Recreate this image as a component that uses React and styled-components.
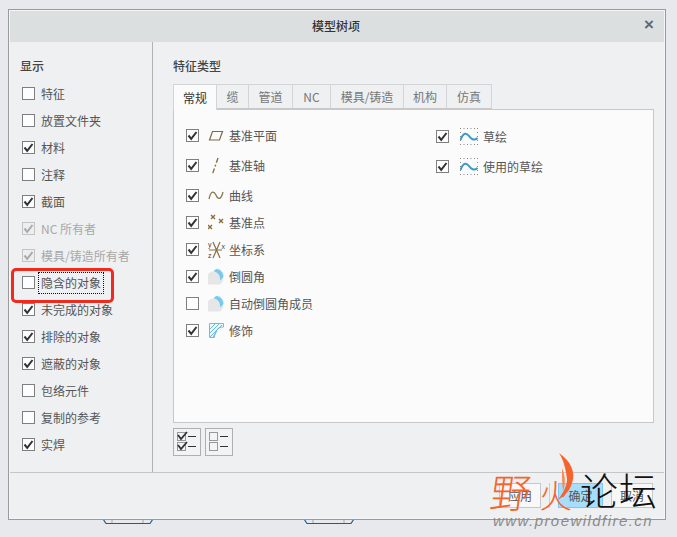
import React from "react";
import styled, { createGlobalStyle } from "styled-components";

const FONT = '"Noto Sans CJK SC", "Noto Sans", sans-serif';

const displayItems = [
  { label: "特征" },
  { label: "放置文件夹" },
  { label: "材料", checked: true },
  { label: "注释" },
  { label: "截面", checked: true },
  { label: "NC 所有者", checked: true, disabled: true },
  { label: "模具/铸造所有者", checked: true, disabled: true },
  { label: "隐含的对象", focused: true },
  { label: "未完成的对象", checked: true },
  { label: "排除的对象", checked: true },
  { label: "遮蔽的对象", checked: true },
  { label: "包络元件" },
  { label: "复制的参考" },
  { label: "实焊", checked: true },
];

const tabs = [
  { label: "常规", width: 44, active: true },
  { label: "缆", width: 32 },
  { label: "管道", width: 44 },
  { label: "NC", width: 38 },
  { label: "模具/铸造", width: 73 },
  { label: "机构", width: 43 },
  { label: "仿真", width: 45 },
];

function Check({ checked, disabled }) {
  return (
    <Box $disabled={disabled}>
      {checked && (
        <svg width="11" height="11" viewBox="0 0 11 11">
          <path d="M1.5 5.5 L4.2 8.8 L9.5 2" fill="none" stroke={disabled ? "#aaa" : "#333"} strokeWidth="2" />
        </svg>
      )}
    </Box>
  );
}

function PlaneIcon() {
  return (
    <svg width="16" height="16" viewBox="0 0 16 16">
      <path d="M4.5 3.5 H14.5 L11.5 12 H1.5 Z" fill="none" stroke="#7d6a42" strokeWidth="1.2" />
    </svg>
  );
}

function AxisIcon() {
  return (
    <svg width="16" height="18" viewBox="0 0 16 18">
      <path d="M10 1 L4.5 17" fill="none" stroke="#8a6f3c" strokeWidth="1.4" strokeDasharray="5 2 2 2" />
    </svg>
  );
}

function CurveIcon() {
  return (
    <svg width="16" height="16" viewBox="0 0 16 16">
      <path d="M1 11 C3 2 6 3 8 7 C10 12 13 12 15 4" fill="none" stroke="#8a7850" strokeWidth="1.3" />
    </svg>
  );
}

function PointsIcon() {
  return (
    <svg width="16" height="18" viewBox="0 0 16 18" stroke="#8a6f3c" strokeWidth="1.4">
      <path d="M3 1 L7 5 M7 1 L3 5 M11 5 L15 9 M15 5 L11 9 M0 11 L4 15 M4 11 L0 15" />
    </svg>
  );
}

function CsysIcon() {
  return (
    <SmallSvg width="17" height="18" viewBox="0 0 17 18">
      <path d="M5 1 L12 17 M12 1 L5 17 M1 9 H14" fill="none" stroke="#8a6f3c" strokeWidth="1.2" />
      <text x="0" y="6" fontSize="7" fill="#444">y</text>
      <text x="0" y="17" fontSize="7" fill="#444">z</text>
      <text x="13.5" y="8" fontSize="7" fill="#444">x</text>
    </SmallSvg>
  );
}

function FilletIcon() {
  return (
    <svg width="17" height="17" viewBox="0 0 17 17">
      <path d="M0 6 C2 4 5 3 7 3 C11 4 13 8 13 13 L16 10 V13 L13 17 H0 Z" fill="#e6e6e6" />
      <path d="M6 3 C7 1 9 0.5 10 0.5 C14 1 16.5 5 16.5 9 L13 13 C13 8 11 4 6 3 Z" fill="#76c8ee" />
      <path d="M10 0.5 C14 1 16.5 5 16.5 9" fill="none" stroke="#c4ebfa" strokeWidth="1" />
    </svg>
  );
}

function CosmeticIcon() {
  return (
    <svg width="15" height="15" viewBox="0 0 15 15">
      <path d="M0.5 14.5 V0.5 H14.5 V4 C9 4 6 7 5.5 14.5 Z" fill="#eef6fa" stroke="#aaa" strokeWidth="1" />
      <path d="M1 6 L6 1 M1 10 L10 1 M1 14 L13 2 M4 14 L8 8" stroke="#6bbbe0" strokeWidth="1" />
    </svg>
  );
}

function SketchIcon() {
  const steps = [0, 3.5, 7, 10.5, 14, 17];
  return (
    <svg width="18" height="17" viewBox="0 0 18 17">
      {steps.map((x) => (
        <g key={x}>
          <rect x={x} y="0" width="1" height="1" fill="#888" />
          <rect x={x} y="16" width="1" height="1" fill="#888" />
        </g>
      ))}
      {[4, 8, 12].map((y) => (
        <g key={y}>
          <rect x="0" y={y} width="1" height="1" fill="#888" />
          <rect x="17" y={y} width="1" height="1" fill="#888" />
        </g>
      ))}
      <path d="M0.5 12 C3 5 6 4 9 8 C11 11 14 13 17.5 10" fill="none" stroke="#3d98c6" strokeWidth="2" />
    </svg>
  );
}

const leftTypes = [
  { label: "基准平面", checked: true, icon: <PlaneIcon />, height: 27 },
  { label: "基准轴", checked: true, icon: <AxisIcon />, height: 33 },
  { label: "曲线", checked: true, icon: <CurveIcon />, height: 27 },
  { label: "基准点", checked: true, icon: <PointsIcon />, height: 27 },
  { label: "坐标系", checked: true, icon: <CsysIcon />, height: 27 },
  { label: "倒圆角", checked: true, icon: <FilletIcon />, height: 27 },
  { label: "自动倒圆角成员", icon: <FilletIcon />, height: 27 },
  { label: "修饰", checked: true, icon: <CosmeticIcon />, height: 27 },
];

const rightTypes = [
  { label: "草绘", checked: true, icon: <SketchIcon />, height: 27 },
  { label: "使用的草绘", checked: true, icon: <SketchIcon />, height: 33 },
];

function TypeRow({ item, wide }) {
  return (
    <TypeLine $height={item.height}>
      <Check checked={item.checked} />
      <IconSlot $wide={wide}>{item.icon}</IconSlot>
      <ItemText>{item.label}</ItemText>
    </TypeLine>
  );
}

function ListToggle({ checked }) {
  return (
    <ToggleButton>
      <svg width="24" height="24" viewBox="0 0 24 24">
        {[2, 12].map((y) => (
          <g key={y}>
            <rect x="0.5" y={y + 0.5} width="8" height="8" fill="#f4f4f4" stroke="#999" />
            {checked && <path d={`M1 ${y + 3} L4 ${y + 7} L10 ${y}`} fill="none" stroke="#333" strokeWidth="1.8" />}
            <rect x="11" y={y + 4} width="8" height="1" fill="#333" />
          </g>
        ))}
      </svg>
    </ToggleButton>
  );
}

function BehindTab({ left }) {
  return (
    <BehindMark $left={left} width="50" height="6" viewBox="0 0 50 6">
      <path d="M0 0 L3 4.5 H47 L50 0" fill="none" stroke="#1c5c9c" strokeWidth="1.2" />
      <path d="M9 0 V4 M40 0 V4" stroke="#9ab" strokeWidth="1" />
    </BehindMark>
  );
}

export default function App() {
  return (
    <Page>
      <GlobalStyle />
      <Dialog>
        <TitleBar>
          <DialogTitle>模型树项</DialogTitle>
          <CloseButton>×</CloseButton>
        </TitleBar>

        <Body>
          <Sidebar>
            <GroupTitle>显示</GroupTitle>
            <DisplayList>
              {displayItems.map((item) => (
                <DisplayRow key={item.label}>
                  <Check checked={item.checked} disabled={item.disabled} />
                  <RowLabel $disabled={item.disabled} $focused={item.focused}>
                    {item.label}
                  </RowLabel>
                </DisplayRow>
              ))}
            </DisplayList>
            <RedMark />
          </Sidebar>

          <Main>
            <TypeTitle>特征类型</TypeTitle>
            <TabRow>
              {tabs.map((tab) => (
                <Tab key={tab.label} $width={tab.width} $active={tab.active}>
                  {tab.label}
                </Tab>
              ))}
            </TabRow>
            <TabPanel>
              <TypeColumn $width={250}>
                {leftTypes.map((item) => (
                  <TypeRow key={item.label} item={item} />
                ))}
              </TypeColumn>
              <TypeColumn $offset={1}>
                {rightTypes.map((item) => (
                  <TypeRow key={item.label} item={item} wide />
                ))}
              </TypeColumn>
            </TabPanel>
            <ToggleRow>
              <ListToggle checked />
              <ListToggle />
            </ToggleRow>
          </Main>
        </Body>

        <Footer>
          <FootButton>应用</FootButton>
          <FootDivider />
          <FootButton $primary>确定</FootButton>
          <FootButton>取消</FootButton>
        </Footer>
      </Dialog>

      <BehindTab left={103} />
      <BehindTab left={304} />

      <Watermark>
        <WaterOrange>野</WaterOrange>
        <WaterFire>火</WaterFire>
        <Flame width="20" height="52" viewBox="0 0 20 52">
          <path d="M2 0 C14 8 19 20 15 30 C13 37 9 42 1 47 C7 38 10 33 10 26 C9 17 7 8 2 0 Z" fill="#f4652d" />
          <path d="M5 15 C8 22 9 29 6 38 C5 31 5 23 5 15 Z" fill="#f98a55" />
        </Flame>
        <WaterBlack>论坛</WaterBlack>
        <WaterUrl>www.proewildfire.cn</WaterUrl>
      </Watermark>
    </Page>
  );
}

/* ---------------- styles ---------------- */

const GlobalStyle = createGlobalStyle`
  html, body {
    margin: 0;
    padding: 0;
    background: #e8e9ec;
    font-family: ${FONT};
    overflow: hidden;
  }
`;

const Page = styled.div`
  position: relative;
  width: 677px;
  height: 537px;
  padding: 9px 0 0 8px;
  box-sizing: border-box;
  background: #e8e9ec;
`;

const Dialog = styled.div`
  position: relative;
  z-index: 1;
  width: 658px;
  height: 511px;
  box-sizing: border-box;
  display: flex;
  flex-direction: column;
  border: 1px solid #9a9a9a;
  background: #eef0f2;
  box-shadow: inset 0 0 0 1px #f4f5f6;
`;

const TitleBar = styled.div`
  position: relative;
  height: 31px;
  margin: 1px 1px 0;
  padding-bottom: 2px;
  box-sizing: border-box;
  display: flex;
  align-items: center;
  justify-content: center;
  background: #dcdfdf;
`;

const DialogTitle = styled.div`
  font-size: 12px;
  color: #333;
  font-weight: 500;
  margin-right: 2px;
`;

const CloseButton = styled.div`
  position: absolute;
  right: 10px;
  top: 4px;
  font-family: "Liberation Sans", sans-serif;
  font-size: 17px;
  line-height: 20px;
  font-weight: 700;
  color: #666;
`;

const Body = styled.div`
  flex: 1;
  display: flex;
  margin: 0 1px;
  min-height: 0;
  border-bottom: 1px solid #c6c6c6;
`;

const Sidebar = styled.div`
  position: relative;
  width: 143px;
  box-sizing: border-box;
  flex: none;
  padding: 15px 0 0 10px;
  border-right: 1px solid #b2b2b2;
`;

const GroupTitle = styled.div`
  font-size: 12px;
  line-height: 18px;
  font-weight: 500;
  color: #444;
`;

const DisplayList = styled.div`
  display: flex;
  flex-direction: column;
  margin-top: 5px;
`;

const DisplayRow = styled.div`
  height: 27px;
  display: flex;
  align-items: center;
  padding-left: 2px;
`;

const Box = styled.span`
  flex: none;
  width: 13px;
  height: 13px;
  box-sizing: border-box;
  display: flex;
  align-items: center;
  justify-content: center;
  border: 1px solid ${(p) => (p.$disabled ? "#c4c4c4" : "#7f7f7f")};
  background: ${(p) => (p.$disabled ? "#eeeeee" : "#fdfdfd")};
`;

const RowLabel = styled.span`
  font-size: 12px;
  line-height: 18px;
  margin-left: ${(p) => (p.$focused ? "5px" : "6px")};
  padding: ${(p) => (p.$focused ? "0 1px" : "0")};
  color: ${(p) => (p.$disabled ? "#a8a8a8" : "#555")};
  outline: ${(p) => (p.$focused ? "1px dotted #111" : "none")};
  outline-offset: 1px;
  white-space: nowrap;
`;

const RedMark = styled.div`
  position: absolute;
  left: 1px;
  top: 226px;
  width: 103px;
  height: 35px;
  box-sizing: border-box;
  border: 3px solid #f22a1e;
  border-radius: 5px;
`;

const Main = styled.div`
  flex: 1;
  min-width: 0;
  padding: 15px 0 0 20px;
`;

const TypeTitle = styled.div`
  font-size: 12px;
  line-height: 18px;
  font-weight: 500;
  color: #444;
`;

const TabRow = styled.div`
  display: flex;
  margin-top: 9px;
  height: 25px;
  position: relative;
  z-index: 1;
`;

const Tab = styled.div`
  width: ${(p) => p.$width}px;
  box-sizing: border-box;
  display: flex;
  align-items: center;
  justify-content: center;
  font-size: 12px;
  color: ${(p) => (p.$active ? "#333" : "#777")};
  background: ${(p) => (p.$active ? "#fbfbfc" : "#eef0f2")};
  border: 1px solid #d2d4d6;
  border-left: ${(p) => (p.$active ? "1px solid #d2d4d6" : "none")};
  border-bottom: ${(p) => (p.$active ? "none" : "1px solid #c8c8c8")};
  height: ${(p) => (p.$active ? "26px" : "25px")};
`;

const TabPanel = styled.div`
  width: 481px;
  height: 314px;
  box-sizing: border-box;
  display: flex;
  padding-top: 12px;
  padding-left: 12px;
  border: 1px solid #c8c8c8;
  background: #fbfbfc;
`;

const TypeColumn = styled.div`
  display: flex;
  flex-direction: column;
  width: ${(p) => (p.$width ? `${p.$width}px` : "auto")};
  margin-top: ${(p) => p.$offset || 0}px;
`;

const TypeLine = styled.div`
  height: ${(p) => p.$height}px;
  display: flex;
  align-items: center;
`;

const IconSlot = styled.span`
  flex: none;
  width: ${(p) => (p.$wide ? "18px" : "16px")};
  height: 18px;
  margin-left: ${(p) => (p.$wide ? "11px" : "9px")};
  margin-right: 5px;
  display: flex;
  align-items: center;
  justify-content: center;
`;

const SmallSvg = styled.svg`
  font-family: "Liberation Sans", sans-serif;
  overflow: visible;
`;

const ItemText = styled.span`
  font-size: 12px;
  line-height: 18px;
  color: #555;
  white-space: nowrap;
`;

const ToggleRow = styled.div`
  display: flex;
  gap: 4px;
  margin-top: 5px;
`;

const ToggleButton = styled.div`
  width: 28px;
  height: 28px;
  box-sizing: border-box;
  padding: 1px 3px;
  border: 1px solid #b0b0b0;
  background: #f2f3f4;
`;

const Footer = styled.div`
  height: 45px;
  flex: none;
  margin: 0 1px 1px;
  box-sizing: border-box;
  padding: 10px 11px 0 0;
  display: flex;
  justify-content: flex-end;
  align-items: flex-start;
`;

const FootButton = styled.div`
  width: ${(p) => (p.$primary ? "45px" : "42px")};
  height: 25px;
  margin-left: 8px;
  box-sizing: border-box;
  display: flex;
  align-items: center;
  justify-content: center;
  font-size: 12px;
  color: #555;
  border: 1px solid ${(p) => (p.$primary ? "#7cc8f2" : "#c8c8c8")};
  background: ${(p) => (p.$primary ? "#a6defc" : "#f8f8f8")};
`;

const FootDivider = styled.div`
  width: 1px;
  height: 25px;
  margin-left: 8px;
  background: #cfcfcf;
`;

const BehindMark = styled.svg`
  position: absolute;
  left: ${(p) => p.$left}px;
  top: 519px;
`;

const Watermark = styled.div`
  position: absolute;
  z-index: 2;
  inset: 0;
  pointer-events: none;
`;

const WaterOrange = styled.span`
  position: absolute;
  left: 491px;
  top: 469px;
  font-size: 40px;
  line-height: 44px;
  font-weight: 300;
  color: #f4652d;
  transform: skewX(-8deg);
`;

const WaterFire = styled.span`
  position: absolute;
  left: 539px;
  top: 474px;
  font-size: 33px;
  line-height: 40px;
  font-weight: 300;
  color: #f4652d;
`;

const Flame = styled.svg`
  position: absolute;
  left: 557px;
  top: 453px;
`;

const WaterBlack = styled.span`
  position: absolute;
  left: 580px;
  top: 467px;
  font-size: 38px;
  line-height: 44px;
  font-weight: 300;
  color: #111;
  letter-spacing: 1px;
`;

const WaterUrl = styled.span`
  position: absolute;
  left: 493px;
  top: 513px;
  font-family: "Liberation Sans", sans-serif;
  font-size: 15px;
  line-height: 16px;
  font-style: italic;
  letter-spacing: 1.45px;
  color: #8a8a8a;
  white-space: nowrap;
`;
